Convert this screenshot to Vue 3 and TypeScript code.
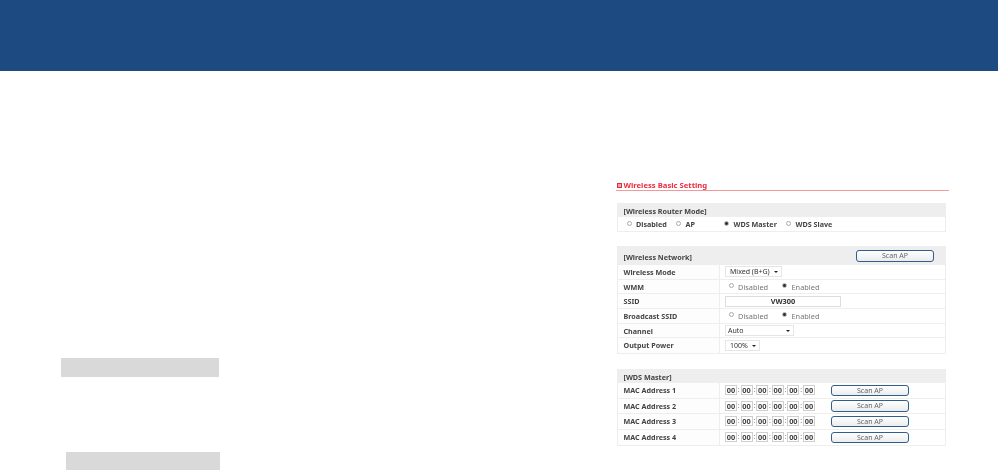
<script setup lang="ts">
const modes = [
  { label: 'Disabled', on: false, w: 49.5 },
  { label: 'AP', on: false, w: 48 },
  { label: 'WDS Master', on: true, w: 62 },
  { label: 'WDS Slave', on: false, w: 50 },
]
const macs = ['MAC Address 1', 'MAC Address 2', 'MAC Address 3', 'MAC Address 4']
const octets = ['00', '00', '00', '00', '00', '00']
</script>

<template>
  <div class="page">
    <header class="banner"></header>
    <main class="main">
      <div class="left">
        <div class="ph ph1"></div>
        <div class="ph ph2"></div>
      </div>
      <div class="panel">
        <h1 class="title"><span class="bullet"></span>Wireless Basic Setting</h1>

        <section class="box first">
          <div class="head h14">[Wireless Router Mode]</div>
          <div class="moderow">
            <label v-for="m in modes" :key="m.label" class="mode" :style="{ width: m.w + 'px' }">
              <span class="radio" :class="{ on: m.on }"></span>{{ m.label }}
            </label>
          </div>
        </section>

        <section class="box second">
          <div class="head h19">
            <span class="headtext">[Wireless Network]</span>
            <button class="btn topbtn">Scan AP</button>
          </div>
          <div class="row">
            <div class="lab">Wireless Mode</div>
            <div class="val"><div class="sel" style="width: 57px">Mixed (B+G)<i></i></div></div>
          </div>
          <div class="row">
            <div class="lab">WMM</div>
            <div class="val radios">
              <label class="opt o1"><span class="radio"></span>Disabled</label>
              <label class="opt"><span class="radio on"></span>Enabled</label>
            </div>
          </div>
          <div class="row">
            <div class="lab">SSID</div>
            <div class="val"><div class="ssid">VW300</div></div>
          </div>
          <div class="row">
            <div class="lab">Broadcast SSID</div>
            <div class="val radios">
              <label class="opt o1"><span class="radio"></span>Disabled</label>
              <label class="opt"><span class="radio on"></span>Enabled</label>
            </div>
          </div>
          <div class="row">
            <div class="lab">Channel</div>
            <div class="val"><div class="sel chan" style="width: 69px">Auto<i></i></div></div>
          </div>
          <div class="row">
            <div class="lab">Output Power</div>
            <div class="val"><div class="sel" style="width: 35px">100%<i></i></div></div>
          </div>
        </section>

        <section class="box third">
          <div class="head h14">[WDS Master]</div>
          <div v-for="m in macs" :key="m" class="row mac">
            <div class="lab">{{ m }}</div>
            <div class="val">
              <div class="octets">
                <template v-for="(o, i) in octets" :key="i">
                  <span v-if="i" class="sep">:</span><span class="oct">{{ o }}</span>
                </template>
              </div>
              <button class="btn rowbtn">Scan AP</button>
            </div>
          </div>
        </section>
      </div>
    </main>
  </div>
</template>

<style>
html, body { margin: 0; background: #fff; overflow: hidden; }
</style>

<style scoped>
.page { width: 998px; height: 470px; overflow: hidden; background: #fff; font-family: "Noto Sans", "DejaVu Sans", sans-serif; }
.banner { height: 71px; background: #1d4a80; }
.main { display: flex; }
.left { width: 616px; padding-top: 287px; box-sizing: border-box; }
.ph { background: #d9d9d9; }
.ph1 { width: 158px; height: 19px; margin-left: 61px; }
.ph2 { width: 154px; height: 18px; margin-left: 66px; margin-top: 75px; }
.panel { width: 333px; padding-top: 109px; filter: blur(0.3px); }
.title {
  margin: 0; height: 10px; line-height: 10px; border-bottom: 1px solid #f29a9a;
  font-size: 7.7px; font-weight: 700; color: #ee2a40; display: flex; align-items: center;
  box-sizing: content-box;
}
.bullet { width: 5px; height: 5px; background: #f3a5a5; border: 1px solid #d8303c; box-sizing: border-box; margin-right: 1.5px; margin-left: 1px; }
.box { width: 329px; margin-left: 1px; border: 1px solid #eeeeee; border-top: 0; box-sizing: border-box; color: #444; }
.first { margin-top: 12px; }
.second { margin-top: 14px; }
.third { margin-top: 15px; }
.head { background: #eeeeee; font-size: 7.2px; font-weight: 700; color: #444; padding-left: 5.5px; display: flex; align-items: center; justify-content: space-between; box-sizing: border-box; padding-top: 1px; }
.h14 { height: 14px; }
.h19 { height: 19px; padding-top: 0; }
.headtext { position: relative; top: 1.5px; }
.moderow { height: 14px; display: flex; align-items: center; padding-left: 8.5px; font-size: 7.2px; font-weight: 700; color: #444; }
.mode { display: flex; align-items: center; white-space: nowrap; }
.radio { width: 5px; height: 5px; border-radius: 50%; border: 1px solid #aaa; background: #fff; box-sizing: border-box; margin-right: 4.5px; display: inline-block; position: relative; top: -1px; flex: none; }
.radio.on { background: radial-gradient(circle, #333 0 1.5px, #fff 2px); }
.row { display: flex; height: 14.7px; border-bottom: 1px solid #eeeeee; box-sizing: border-box; }
.row:last-child { border-bottom: 0; }
.lab { width: 102px; flex: none; background: #fdfdfd; border-right: 1px solid #eeeeee; box-sizing: border-box; padding-left: 5.5px; font-size: 7.2px; font-weight: 700; color: #444; line-height: 14px; white-space: nowrap; }
.val { padding-left: 5px; flex: 1; display: flex; align-items: center; font-size: 7.4px; color: #555; }
.sel { height: 11px; border: 1px solid #e6e6e6; box-sizing: border-box; display: flex; align-items: center; justify-content: space-between; padding: 0 3px 0 4px; color: #333; white-space: nowrap; font-size: 7px; background: #fff; }
.sel.chan { padding-left: 2px; }
.sel i { width: 0; height: 0; border: 2px solid transparent; border-top: 2.4px solid #222; border-bottom: 0; display: block; }
.radios { padding-left: 8.5px; }
.opt { display: flex; align-items: center; color: #777; }
.o1 { width: 53.5px; }
.ssid { width: 116px; height: 11px; border: 1px solid #ddd; box-sizing: border-box; text-align: center; font-weight: 700; font-size: 7.4px; line-height: 9px; color: #333; }
.btn { font-family: "Noto Sans", "DejaVu Sans", sans-serif; font-size: 7px; color: #666; background: linear-gradient(#fff, #ececec); border: 1px solid #2f5d8c; border-radius: 3px; padding: 0; box-sizing: border-box; cursor: default; line-height: 9px; }
.topbtn { width: 78px; height: 12px; margin-right: 11px; }
.rowbtn { width: 78px; height: 11.5px; margin-left: 15px; }
.mac { height: 15.5px; }
.mac .lab { line-height: 15px; }
.octets { display: flex; align-items: center; width: 91px; }
.oct { width: 12px; height: 10px; border: 1px solid #cfcfcf; box-sizing: border-box; font-size: 7.4px; font-weight: 700; color: #444; text-align: center; line-height: 8px; flex: none; }
.sep { width: 3.6px; text-align: center; flex: none; color: #888; font-size: 7px; line-height: 8px; }
</style>
